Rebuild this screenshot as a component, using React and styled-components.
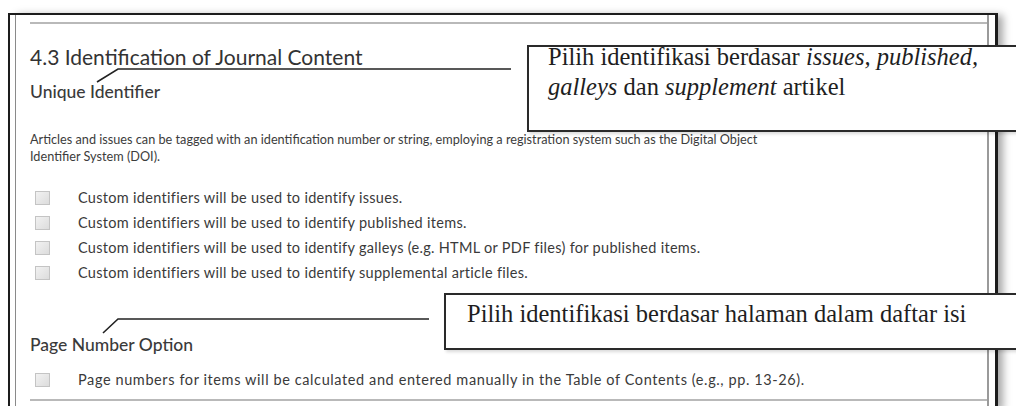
import React from "react";
import styled, { createGlobalStyle } from "styled-components";

const Global = createGlobalStyle`
  html, body { margin: 0; padding: 0; background: #fff; }
  body { width: 1016px; height: 406px; overflow: hidden; font-family: Lato, "Open Sans", sans-serif; }
`;

const Page = styled.div`
  position: relative;
  width: 1016px;
  height: 406px;
  overflow: hidden;
  padding-top: 13px;
  box-sizing: border-box;
`;

const Frame = styled.div`
  margin-left: 8px;
  width: 990px;
  height: 400px;
  box-sizing: border-box;
  border: 2px solid #1c1c1c;
  border-right-width: 3px;
  border-bottom: none;
  background: #fff;
  box-shadow: 7px 0 8px -2px rgba(0, 0, 0, 0.35);
  display: flex;
`;

const Inner = styled.div`
  flex: 1;
  margin: 0 6px 0 5px;
  border-left: 1px solid #8a8a8a;
  border-right: 2px solid #9a9a9a;
  padding: 7px 0 0 14px;
  color: #363636;
`;

const Rule = styled.div`
  height: 2px;
  background: #b9b9b9;
  margin-top: ${(p) => p.$top || 0}px;
`;

const Heading = styled.h1`
  margin: 21px 0 0;
  font-size: 21px;
  line-height: 24px;
  font-weight: 400;
  color: #333;
  white-space: nowrap;
`;

const SubHeading = styled.h2`
  margin: ${(p) => p.$top}px 0 0;
  font-size: 17.5px;
  line-height: 20px;
  font-weight: 500;
  color: #3a3a3a;
  white-space: nowrap;
`;

const Paragraph = styled.p`
  margin: 29px 0 20px;
  font-size: 12.7px;
  line-height: 17px;
  color: #3c3c3c;
  white-space: nowrap;
`;

const Row = styled.div`
  display: flex;
  align-items: center;
  height: 25px;
  font-size: 14.5px;
  letter-spacing: ${(p) => p.$spacing || 0.3}px;
  color: #3a3a3a;
  white-space: nowrap;
`;

const Box = styled.span`
  flex: none;
  width: 15px;
  height: 14px;
  margin-left: 5px;
  margin-right: 28px;
  box-sizing: border-box;
  border: 1px solid #c4c4c4;
  background: linear-gradient(135deg, #f2f2f2, #dcdcdc);
`;

const Options = styled.div`
  margin-top: ${(p) => p.$top || 0}px;
`;

const Overlay = styled.svg`
  position: absolute;
  left: 0;
  top: 0;
  pointer-events: none;
`;

const Callout = styled.div`
  position: absolute;
  left: ${(p) => p.$left}px;
  top: ${(p) => p.$top}px;
  right: -20px;
  height: ${(p) => p.$height}px;
  box-sizing: border-box;
  border: 2px solid #2a2a2a;
  background: #fff;
  padding-left: ${(p) => p.$padLeft}px;
  font-family: "Liberation Serif", "Times New Roman", serif;
  font-size: 24.5px;
  line-height: 30px;
  color: #1e1e1e;
  white-space: nowrap;
  box-shadow: 2px 2px 3px rgba(0, 0, 0, 0.15);
`;

const CalloutText = styled.div`
  margin-top: ${(p) => p.$shift}px;
`;

const items = [
  "Custom identifiers will be used to identify issues.",
  "Custom identifiers will be used to identify published items.",
  "Custom identifiers will be used to identify galleys (e.g. HTML or PDF files) for published items.",
  "Custom identifiers will be used to identify supplemental article files.",
];

export default function App() {
  return (
    <>
      <Global />
      <Page>
        <Frame>
          <Inner>
            <Rule />
            <Heading>4.3 Identification of Journal Content</Heading>
            <SubHeading $top={13}>Unique Identifier</SubHeading>
            <Paragraph>
              Articles and issues can be tagged with an identification number or string, employing a registration system such as the Digital Object
              <br />
              Identifier System (DOI).
            </Paragraph>
            <Options>
              {items.map((t) => (
                <Row key={t}>
                  <Box />
                  {t}
                </Row>
              ))}
            </Options>
            <SubHeading $top={50}>Page Number Option</SubHeading>
            <Options $top={12}>
              <Row $spacing={0.6}>
                <Box />
                Page numbers for items will be calculated and entered manually in the Table of Contents (e.g., pp. 13-26).
              </Row>
            </Options>
            <Rule $top={7} />
          </Inner>
        </Frame>
        <Overlay width="1016" height="406" viewBox="0 0 1016 406">
          <polyline points="97,82 118,69 511,69" fill="none" stroke="#222" strokeWidth="1.6" />
          <polyline points="103,333 118,319 429,319" fill="none" stroke="#222" strokeWidth="1.6" />
        </Overlay>
        <Callout $left={527} $top={45} $height={87} $padLeft={19}>
          <CalloutText $shift={-5}>
            Pilih identifikasi berdasar <i>issues, published,</i>
            <br />
            <i>galleys</i> dan <i>supplement</i> artikel
          </CalloutText>
        </Callout>
        <Callout $left={444} $top={293} $height={57} $padLeft={21}>
          <CalloutText $shift={4}>Pilih identifikasi berdasar halaman dalam daftar isi</CalloutText>
        </Callout>
      </Page>
    </>
  );
}
